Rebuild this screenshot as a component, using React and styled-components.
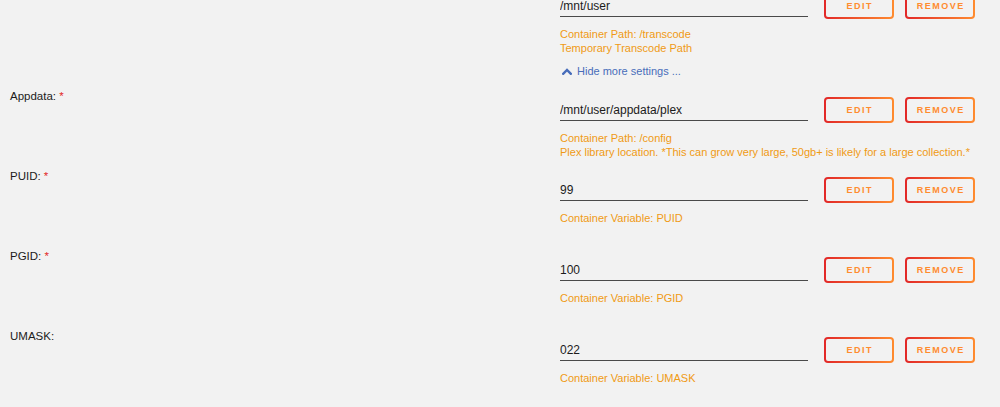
import React from 'react';
import styled, { createGlobalStyle } from 'styled-components'

const GlobalStyle = createGlobalStyle`
    html, body {
        margin: 0;
        padding: 0;
        background-color: #f2f2f2;
        overflow: hidden;
    }
    body {
        font-family: "Liberation Sans", Arial, sans-serif;
        color: #1c1b1b;
    }
`

const Page = styled.div`
    height: 407px;
    padding: 0 10px;
    overflow: hidden;
`
const Form = styled.div`
    margin-top: -17px;
    display: flex;
    flex-direction: column;
`
const Field = styled.div`
    display: grid;
    grid-template-columns: 550px 1fr;
    min-height: 80px;
`
const Label = styled.div`
    font-size: 11.5px;
    line-height: 16px;
    padding-top: 1px;
    color: #1c1b1b;

    ${props => props.required && `
        &::after {
            content: " *";
            color: #e22828;
        }
    `}
`
const Content = styled.div`
    display: flex;
    flex-direction: column;
`
const Controls = styled.div`
    display: flex;
    align-items: flex-start;
    padding-top: 10px;
`
const TextInput = styled.input`
    width: 248px;
    height: 24px;
    box-sizing: border-box;
    padding: 2px 0 0 0;
    margin: 0 16px 0 0;
    border: none;
    border-bottom: 1px solid #4a4a4a;
    background: transparent;
    font-family: "Liberation Sans", Arial, sans-serif;
    font-size: 12px;
    color: #1c1b1b;
    outline: none;
`
const Button = styled.button`
    width: 70px;
    height: 26px;
    box-sizing: border-box;
    margin: 0 11px 0 0;
    padding: 0 0 0 1.5px;
    border: 2px solid transparent;
    border-radius: 4px;
    background: linear-gradient(#f2f2f2, #f2f2f2) padding-box,
                linear-gradient(90deg, #e22828, #ff8c2f) border-box;
    font-family: "Liberation Sans", Arial, sans-serif;
    font-size: 9px;
    font-weight: bold;
    letter-spacing: 1.5px;
    text-transform: uppercase;
    color: #ff8c2f;
    cursor: pointer;
`
const Description = styled.div`
    margin-top: 8px;
    font-size: 11px;
    line-height: 14px;
    color: #f09a14;
`
const ToggleRow = styled.div`
    display: grid;
    grid-template-columns: 550px 1fr;
    padding-bottom: 8px;
`
const Toggle = styled.a`
    display: flex;
    align-items: center;
    gap: 5px;
    padding-left: 2px;
    font-size: 11px;
    line-height: 16px;
    color: #486dba;
    text-decoration: none;
    cursor: pointer;
`

function ChevronUp(){
    return(
        <svg width="10" height="7" viewBox="0 0 10 7">
            <polyline points="1.2,5.8 5,2 8.8,5.8" fill="none" stroke="#486dba" strokeWidth="2.4" strokeLinecap="square" />
        </svg>
    )
}

function PathField({label, required, value, lines}){
    return(
        <Field>
            <Label required={required}>{label}</Label>
            <Content>
                <Controls>
                    <TextInput type="text" defaultValue={value} />
                    <Button>Edit</Button>
                    <Button>Remove</Button>
                </Controls>
                <Description>
                    {lines.map(line => <div key={line}>{line}</div>)}
                </Description>
            </Content>
        </Field>
    )
}

const fields = [
    {label: 'Appdata:', required: true, value: '/mnt/user/appdata/plex', lines: ['Container Path: /config', 'Plex library location. *This can grow very large, 50gb+ is likely for a large collection.*']},
    {label: 'PUID:', required: true, value: '99', lines: ['Container Variable: PUID']},
    {label: 'PGID:', required: true, value: '100', lines: ['Container Variable: PGID']},
    {label: 'UMASK:', required: false, value: '022', lines: ['Container Variable: UMASK']},
]

export default function App(){

    return(
        <Page>
            <GlobalStyle />
            <Form>
                <PathField label="" value="/mnt/user" lines={['Container Path: /transcode', 'Temporary Transcode Path']} />
                <ToggleRow>
                    <div></div>
                    <Toggle><ChevronUp /> Hide more settings ...</Toggle>
                </ToggleRow>
                {fields.map(f => (
                    <PathField key={f.label} {...f} />
                ))}
            </Form>
        </Page>
    )

}
